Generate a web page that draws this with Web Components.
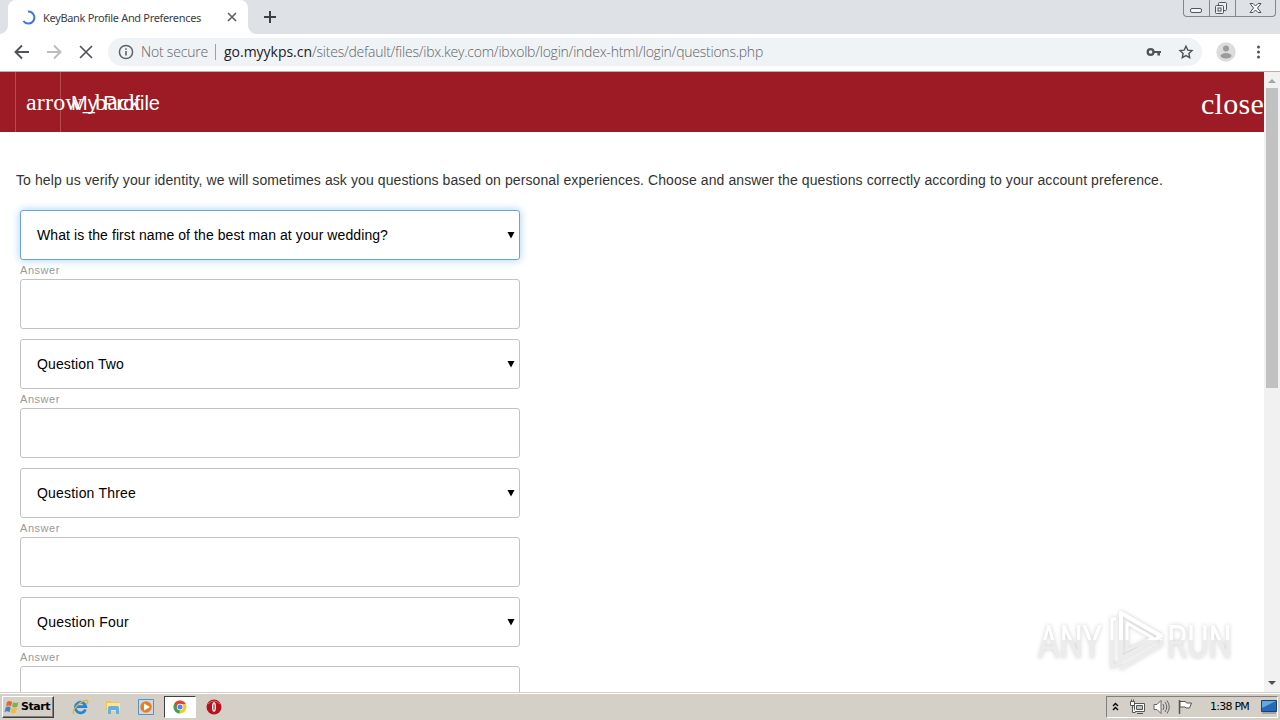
<!DOCTYPE html>
<html lang="en">
<head>
<meta charset="utf-8">
<title>KeyBank Profile And Preferences</title>
<style>
    html, body {
        margin: 0;
        height: 720px;
        overflow: hidden;
        background: #fff;
    }
</style>
</head>
<body>
<desktop-screen></desktop-screen>

<script>
// Text run that spreads its letters over a given width
class FitText extends HTMLElement {
    constructor() {
        super();
        this.attachShadow({ mode: 'open' });
        this.shadowRoot.innerHTML = `
            <style>
                :host { display: inline-block; flex: none; }
                span { display: inline-block; white-space: pre; }
            </style>
            <span><slot></slot></span>
        `;
    }

    connectedCallback() {
        const span = this.shadowRoot.querySelector('span');
        const width = Number(this.getAttribute('width'));
        const count = this.textContent.length;
        const natural = span.getBoundingClientRect().width;
        if (width && count && natural) {
            span.style.letterSpacing = (width - natural) / count + 'px';
        }
    }
}

// Tab strip with the window buttons
class TabStrip extends HTMLElement {
    constructor() {
        super();
        this.attachShadow({ mode: 'open' });
        this.shadowRoot.innerHTML = `
            <style>
                :host {
                    display: flex;
                    height: 34px;
                    background: #dee1e6;
                    font: 11px "Noto Sans", "Open Sans", sans-serif;
                    color: #3c4043;
                    justify-content: space-between;
                }
                svg { flex: none; }
                .tabs { display: flex; }
                .tab {
                    position: relative;
                    box-sizing: border-box;
                    display: flex;
                    align-items: center;
                    width: 240px;
                    height: 34px;
                    margin-left: 8px;
                    padding-left: 13px;
                    border-radius: 8px 8px 0 0;
                    background: #fff;
                }
                .tab::before, .tab::after {
                    content: "";
                    position: absolute;
                    bottom: 0;
                    width: 8px;
                    height: 8px;
                }
                .tab::before { left: -8px; background: radial-gradient(circle at 0 0, transparent 7.5px, #fff 8px); }
                .tab::after { right: -8px; background: radial-gradient(circle at 100% 0, transparent 7.5px, #fff 8px); }
                .spinner { margin-right: 7px; }
                .x { margin-left: auto; margin-right: 11px; }
                .plus { margin: 10px 0 0 15px; }
                .buttons {
                    display: flex;
                    box-sizing: border-box;
                    width: 93px;
                    height: 17px;
                    margin-right: 4px;
                    border: 1px solid #82868f;
                    border-top: 0;
                    border-radius: 0 0 4px 4px;
                }
                .buttons svg { display: block; }
                .buttons div { box-sizing: border-box; }
                .buttons div + div { border-left: 1px solid #82868f; }
            </style>
            <div class="tabs">
                <div class="tab">
                    <svg class="spinner" width="15" height="15" viewBox="0 0 15 15" fill="none" stroke="#3b78e0" stroke-width="2"><path d="M7 1.600A6 6 0 1 1 2.400 11"/></svg>
                    <fit-text width="158">KeyBank Profile And Preferences</fit-text>
                    <svg class="x" width="10" height="10" viewBox="0 0 10 10" stroke="#5f6368" stroke-width="1.700"><path d="M1 1l8 8M9 1l-8 8"/></svg>
                </div>
                <svg class="plus" width="14" height="14" viewBox="0 0 14 14" stroke="#3c4043" stroke-width="2"><path d="M7 1v12M1 7h12"/></svg>
            </div>
            <div class="buttons">
                <div style="width:25px"><svg width="25" height="16" fill="#f4f5f7" stroke="#51555e"><rect x="6.500" y="8.500" width="11" height="4" rx="1.500"/></svg></div>
                <div style="width:26px"><svg width="24" height="16" fill="#eceef1" stroke="#51555e"><rect x="8.500" y="2.500" width="8" height="8" rx="1"/><rect x="5.500" y="5.500" width="8" height="8" rx="1"/><rect x="8" y="8" width="3" height="3"/></svg></div>
                <div style="width:40px"><svg width="39" height="16" fill="#f4f5f7" stroke="#51555e"><path d="M14 3.500h3l2.500 2.500L22 3.500h3l-3.500 4.500 3.500 4.500h-3l-2.500-2.500-2.500 2.500h-3l3.500-4.500z"/></svg></div>
            </div>
        `;
    }
}

// Navigation buttons and address bar
class AddressBar extends HTMLElement {
    constructor() {
        super();
        this.attachShadow({ mode: 'open' });
        this.shadowRoot.innerHTML = `
            <style>
                :host {
                    display: flex;
                    box-sizing: border-box;
                    align-items: center;
                    height: 38px;
                    padding: 0 14px 2px;
                    border-bottom: 1px solid #c9a9a9;
                    background: #fff;
                    font: 14px "Open Sans", "Noto Sans", sans-serif;
                    font-weight: 300;
                    color: #5f6368;
                }
                svg { flex: none; display: block; }
                .nav { display: flex; gap: 16px; }
                .field {
                    display: flex;
                    align-items: center;
                    box-sizing: border-box;
                    width: 1094px;
                    height: 28px;
                    margin-left: 14px;
                    padding: 0 8px 0 10px;
                    border-radius: 14px;
                    background: #f0f3f5;
                }
                .info { margin-right: 7px; }
                .bar { width: 1px; height: 16px; margin: 0 8px 0 7px; background: #9aa0a6; }
                .host { color: #202124; font-weight: 400; }
                .key { margin-left: auto; margin-right: 16px; }
                .avatar { margin: 0 12px 0 14px; }
            </style>
            <div class="nav">
                <svg width="16" height="16" viewBox="0 0 16 16" fill="none" stroke="#505358" stroke-width="1.900"><path d="M15 8H2M8 1.500L1.500 8 8 14.500"/></svg>
                <svg width="16" height="16" viewBox="0 0 16 16" fill="none" stroke="#babcbe" stroke-width="1.900"><path d="M1 8h13M8 1.500L14.500 8 8 14.500"/></svg>
                <svg width="16" height="16" viewBox="0 0 16 16" fill="none" stroke="#505358" stroke-width="1.700"><path d="M2 2l12 12M14 2L2 14"/></svg>
            </div>
            <div class="field">
                <svg class="info" width="16" height="16" viewBox="0 0 16 16"><circle cx="8" cy="8" r="6.600" fill="none" stroke="#5f6368" stroke-width="1.500"/><path d="M8 7v4.500M8 4.200v1.600" stroke="#5f6368" stroke-width="1.600"/></svg>
                <fit-text width="67">Not secure</fit-text>
                <span class="bar"></span>
                <fit-text class="host" width="88">go.myykps.cn</fit-text>
                <fit-text width="451">/sites/default/files/ibx.key.com/ibxolb/login/index-html/login/questions.php</fit-text>
                <svg class="key" width="16" height="16" viewBox="0 0 16 16"><circle cx="4.600" cy="8" r="2.900" fill="none" stroke="#505358" stroke-width="2.300"/><path d="M7.500 6.900H15v2.200h-1v2.400h-2.600V9.100H7.500z" fill="#505358"/></svg>
                <svg width="16" height="16" viewBox="0 0 16 16" fill="none" stroke="#505358" stroke-width="1.400"><path d="M8 2.200l1.800 3.900 4.200.5-3.100 2.900.8 4.200L8 11.600l-3.700 2.100.8-4.200L2 6.600l4.200-.5z"/></svg>
            </div>
            <svg class="avatar" width="20" height="20" viewBox="0 0 20 20"><circle cx="10" cy="10" r="9.700" fill="#dcdcdc"/><circle cx="10" cy="6.500" r="3" fill="#9b9c9e"/><ellipse cx="10" cy="13.800" rx="5.500" ry="2.700" fill="#9b9c9e"/></svg>
            <svg width="18" height="16" viewBox="0 0 18 16" fill="#505358"><circle cx="10.500" cy="3" r="1.500"/><circle cx="10.500" cy="8" r="1.500"/><circle cx="10.500" cy="13" r="1.500"/></svg>
        `;
    }
}

// Red page header
class ProfileHeader extends HTMLElement {
    constructor() {
        super();
        this.attachShadow({ mode: 'open' });
        this.shadowRoot.innerHTML = `
            <style>
                :host {
                    display: flex;
                    height: 60px;
                    overflow: hidden;
                    background: #9c1b25;
                    color: #fff;
                }
                .back {
                    box-sizing: border-box;
                    width: 46px;
                    margin-left: 15px;
                    padding-left: 10px;
                    border: solid #b84a50;
                    border-width: 0 1px;
                    font: 24px/60px "Liberation Serif", serif;
                    white-space: nowrap;
                }
                .title { padding-left: 10px; font: 20px/62px "Liberation Sans", sans-serif; }
                .close { margin-left: auto; font: 30px/64px "Liberation Serif", serif; }
            </style>
            <div class="back"><fit-text width="115">arrow_back</fit-text></div>
            <div class="title"><fit-text width="89">My Profile</fit-text></div>
            <div class="close"><fit-text width="63">close</fit-text></div>
        `;
    }
}

// One question select with its answer box
class QuestionField extends HTMLElement {
    constructor() {
        super();
        this.attachShadow({ mode: 'open' });
        this.shadowRoot.innerHTML = `
            <style>
                :host {
                    display: block;
                    width: 500px;
                    font: 14px "Liberation Sans", Arial, sans-serif;
                    color: #000;
                }
                .select, .input {
                    box-sizing: border-box;
                    height: 50px;
                    border: 1px solid #c3c3c3;
                    border-radius: 3px;
                    background: #fff;
                }
                .select {
                    display: flex;
                    align-items: center;
                    justify-content: space-between;
                    padding: 0 4px 0 16px;
                }
                :host([focused]) .select {
                    border-color: #66a5d4;
                    box-shadow: 0 0 8px rgba(102, 175, 233, 0.6);
                }
                label {
                    display: block;
                    height: 19px;
                    font-size: 11px;
                    line-height: 20px;
                    color: #999;
                }
            </style>
            <div class="select">
                <slot></slot>
                <svg width="8" height="8" viewBox="0 0 8 8"><path d="M.5 1h7L4 7.500z"/></svg>
            </div>
            <label><fit-text width="40">Answer</fit-text></label>
            <div class="input"></div>
        `;
    }
}

// Vertical page scrollbar
class PageScrollbar extends HTMLElement {
    constructor() {
        super();
        this.attachShadow({ mode: 'open' });
        this.shadowRoot.innerHTML = `
            <style>
                :host {
                    display: flex;
                    flex-direction: column;
                    flex: none;
                    align-items: center;
                    width: 16px;
                    background: #f1f1f1;
                }
                svg { flex: none; }
                .thumb { width: 12px; height: 300px; background: #c1c1c1; }
                .down { margin-top: auto; }
            </style>
            <svg width="16" height="16"><path d="M4 11h8L8 7z" fill="#a3a3a3"/></svg>
            <div class="thumb"></div>
            <svg class="down" width="16" height="16"><path d="M4 5h8L8 9z" fill="#505050"/></svg>
        `;
    }
}

// Translucent logo in the corner
class RunWatermark extends HTMLElement {
    constructor() {
        super();
        this.attachShadow({ mode: 'open' });
        this.shadowRoot.innerHTML = `
            <style>
                :host { display: block; width: 210px; height: 76px; }
                svg { display: block; filter: drop-shadow(0 0 2px rgba(0, 0, 0, 0.2)); }
                text { font: 46px Roboto, "Liberation Sans", sans-serif; }
            </style>
            <svg width="210" height="76" viewBox="0 0 210 76">
                <defs>
                    <linearGradient id="fade" gradientUnits="userSpaceOnUse" x1="0" y1="0" x2="0" y2="76">
                        <stop offset="0.500" stop-color="#fff"/>
                        <stop offset="0.500" stop-color="#ececec"/>
                    </linearGradient>
                </defs>
                <g fill="url(#fade)">
                    <text x="8" y="56" textLength="64" lengthAdjust="spacingAndGlyphs">ANY</text>
                    <text x="137" y="56" textLength="65" lengthAdjust="spacingAndGlyphs">RUN</text>
                </g>
                <g fill="none" stroke="url(#fade)" stroke-width="4" stroke-linejoin="round">
                    <path d="M91 57V11l40 23-40 23"/>
                    <path d="M86 17h-4v48l9-5M90 67l41-24v-6M97 21v27l26-12z" stroke-width="3"/>
                </g>
            </svg>
        `;
    }
}

// Windows taskbar
class TaskBar extends HTMLElement {
    constructor() {
        super();
        this.attachShadow({ mode: 'open' });
        this.shadowRoot.innerHTML = `
            <style>
                :host {
                    display: flex;
                    box-sizing: border-box;
                    align-items: center;
                    height: 28px;
                    padding: 0 0 0 2px;
                    border-top: 1px solid #d4d0c8;
                    box-shadow: inset 0 1px #fff;
                    background: #d4d0c8;
                    font: 11px "DejaVu Sans", sans-serif;
                    color: #000;
                }
                svg { display: block; flex: none; }
                .start {
                    display: flex;
                    box-sizing: border-box;
                    align-items: center;
                    gap: 1px;
                    width: 52px;
                    height: 22px;
                    padding-left: 1px;
                    border: 1px solid;
                    border-color: #fff #404040 #404040 #fff;
                    box-shadow: inset -1px -1px #808080;
                    font-weight: bold;
                }
                .apps { display: flex; align-items: center; margin-left: 18px; }
                .app { display: grid; place-items: center; width: 16px; margin-right: 17px; }
                .active {
                    box-sizing: border-box;
                    width: 32px;
                    height: 22px;
                    margin: 0 10px 0 -7px;
                    border: 1px solid;
                    border-color: #404040 #fff #fff #404040;
                    background: #fff;
                }
                .tray {
                    display: flex;
                    box-sizing: border-box;
                    align-items: center;
                    width: 172px;
                    height: 22px;
                    margin-left: auto;
                    margin-right: 2px;
                    padding-left: 5px;
                    border: 1px solid;
                    border-color: #808080 #fff #fff #808080;
                }
            </style>
            <div class="start">
                <svg width="16" height="16" viewBox="0 0 16 16"><path d="M3 3q2.500-2 5 0L7 7.500q-2.500-2-5 0z" fill="#e7642b"/><path d="M9 3.200q2.500 1.500 5.500 0l-1.200 4.600q-2.500 1.500-5.300-.2z" fill="#79b547"/><path d="M1.700 8.500q2.500-2 5 0l-1.200 4.800q-2.500-2-5 0z" fill="#3c82ce"/><path d="M7.700 8.700q2.500 1.500 5.300 0l-1.200 4.800q-2.500 1.500-5.300-.2z" fill="#f3bd2c"/></svg>
                <fit-text width="29">Start</fit-text>
            </div>
            <div class="apps">
                <div class="app">
                    <svg width="17" height="16" viewBox="0 0 17 16" fill="none"><path d="M13.500 10.500a5.300 5.300 0 1 1 .3-2.800H5" stroke="#2384d2" stroke-width="2.700"/><path d="M2 15C-1 12 8 1 15 1.500c1.500.4.8 2-.3 3.500" stroke="#e3b43b" stroke-width="1.300"/></svg>
                </div>
                <div class="app">
                    <svg width="16" height="16" viewBox="0 0 16 16"><path d="M1 2h5l1 1h7v9H1z" fill="#e9c660"/><path d="M2 4h13v8H2z" fill="#f8e5a0"/><path d="M3 15V9q0-2 2-2h7q2 0 2 2v6h-3v-4H6v4z" fill="#69afd9"/></svg>
                </div>
                <div class="app">
                    <svg width="16" height="16" viewBox="0 0 16 16"><path d="M.5.5h15v15H.5z" fill="#c5dcf0" stroke="#5b91c4"/><circle cx="8" cy="8" r="5.800" fill="#ee7e1b"/><path d="M6 4.500v7l6-3.500z" fill="#fff"/></svg>
                </div>
                <div class="app active">
                    <svg width="14" height="14" viewBox="0 0 14 14"><circle cx="7" cy="7" r="6.500" fill="#f8c827"/><path d="M7 7L1.400 3.700A6.500 6.500 0 0 0 6.500 13.500z" fill="#36a652"/><path d="M1.300 3.700A6.500 6.500 0 0 1 12.700 4H7v3L4 8z" fill="#dc4638"/><circle cx="7" cy="7" r="3.200" fill="#fff"/><circle cx="7" cy="7" r="2.500" fill="#4a86e8"/></svg>
                </div>
                <div class="app">
                    <svg width="16" height="16" viewBox="0 0 16 16"><circle cx="8" cy="8" r="7.500" fill="#b5121b"/><path d="M2 5q6-6 12 0" fill="none" stroke="#e5646a"/><ellipse cx="8" cy="8" rx="2" ry="4.800" fill="#fff"/><ellipse cx="8" cy="8" rx=".6" ry="3.500" fill="#b5121b"/></svg>
                </div>
            </div>
            <div class="tray">
                <svg width="7" height="10" viewBox="0 0 7 10" fill="none" stroke="#000" stroke-width="1.400"><path d="M1 4l2.500-2.500L6 4M1 8l2.500-2.500L6 8"/></svg>
                <svg style="margin-left:10px" width="16" height="16" viewBox="0 0 16 16" fill="#fff" stroke="#555"><path d="M5.500 4.500h10v8h-10zM8 14.500h6"/><path d="M7.500 6.500h6v4h-6z" fill="#c3c3c3"/><path d="M1.500 2.500h4v4h-4zM2.500.5v2M4.500.5v2M3.500 6.500v7h3"/></svg>
                <svg style="margin-left:8px" width="17" height="16" viewBox="0 0 17 16" fill="none" stroke="#666"><path d="M1 5.500h3l4-4v13l-4-4H1z" fill="#fff"/><path d="M10 5q2 3 0 6M12 3q3.500 5 0 10M14 1.500q4.500 6.500 0 13"/></svg>
                <svg style="margin-left:7px" width="17" height="16" viewBox="0 0 17 16" stroke="#555"><path d="M2.500 1v14" stroke-width="1.500"/><path d="M3 2.500h5.500l1 1.500h5l-2 5H9L8 8H3z" fill="#fff"/></svg>
                <fit-text style="margin-left:16px" width="39">1:38 PM</fit-text>
                <svg style="margin-left:12px" width="16" height="14" viewBox="0 0 16 14"><path d="M.5.5h15v11H.5z" fill="#2869b5" stroke="#174275"/><path d="M1 1h14L1 8z" fill="#67a7df"/><path d="M1 13h14" stroke="#777"/></svg>
            </div>
        `;
    }
}

// Whole desktop: browser window and taskbar
class DesktopScreen extends HTMLElement {
    constructor() {
        super();
        this.attachShadow({ mode: 'open' });
        this.shadowRoot.innerHTML = `
            <style>
                :host {
                    position: relative;
                    display: flex;
                    flex-direction: column;
                    width: 1280px;
                    height: 720px;
                    overflow: hidden;
                }
                .view { display: flex; height: 620px; }
                main {
                    width: 1264px;
                    overflow: hidden;
                    background: #fff;
                    font: 14px "Liberation Sans", Arial, sans-serif;
                    color: #333;
                }
                p { margin: 38px 16px 20px; line-height: 20px; }
                p fit-text { vertical-align: top; }
                .questions { display: grid; gap: 10px; padding-left: 20px; }
                run-watermark { position: absolute; left: 1030px; top: 602px; }
            </style>
            <tab-strip></tab-strip>
            <address-bar></address-bar>
            <div class="view">
                <main>
                    <profile-header></profile-header>
                    <p><fit-text width="1147">To help us verify your identity, we will sometimes ask you questions based on personal experiences. Choose and answer the questions correctly according to your account preference.</fit-text></p>
                    <div class="questions">
                        <question-field focused><fit-text width="351">What is the first name of the best man at your wedding?</fit-text></question-field>
                        <question-field><fit-text width="87">Question Two</fit-text></question-field>
                        <question-field><fit-text width="99">Question Three</fit-text></question-field>
                        <question-field><fit-text width="92">Question Four</fit-text></question-field>
                    </div>
                </main>
                <page-scrollbar></page-scrollbar>
            </div>
            <task-bar></task-bar>
            <run-watermark></run-watermark>
        `;
    }
}

// Register the elements, the text helper first
customElements.define('fit-text', FitText);
customElements.define('tab-strip', TabStrip);
customElements.define('address-bar', AddressBar);
customElements.define('profile-header', ProfileHeader);
customElements.define('question-field', QuestionField);
customElements.define('page-scrollbar', PageScrollbar);
customElements.define('run-watermark', RunWatermark);
customElements.define('task-bar', TaskBar);
customElements.define('desktop-screen', DesktopScreen);
</script>
</body>
</html>
